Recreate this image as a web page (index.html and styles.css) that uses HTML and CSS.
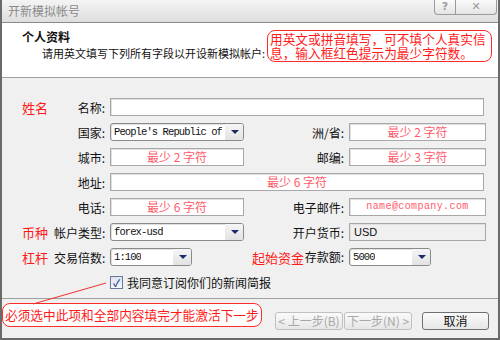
FILE: index.html
```html
<!DOCTYPE html>
<html lang="zh-CN">

<head>
	<meta charset="UTF-8">
	<title>开新模拟帐号</title>
	<link rel="stylesheet" href="styles.css">
</head>

<body>
	<div class="window">
		<div class="titlebar">
			<span class="title">开新模拟帐号</span>
			<div class="caption-btns">
				<span class="cap-btn help">?</span>
				<span class="cap-btn close">✕</span>
			</div>
		</div>

		<header class="intro">
			<div class="intro-text">
				<h1>个人资料</h1>
				<p>请用英文填写下列所有字段以开设新模拟帐户:</p>
			</div>
			<div class="note note-top">用英文或拼音填写，可不填个人真实信息，输入框红色提示为最少字符数。</div>
		</header>

		<section class="form">
			<span class="tag">姓名</span>
			<label>名称:</label>
			<div class="field wide"></div>

			<span></span>
			<label>国家:</label>
			<div class="field select"><span class="val">People's Republic of</span><span class="caret"></span></div>
			<label>洲/省:</label>
			<div class="field hint">最少 2 字符</div>

			<span></span>
			<label>城市:</label>
			<div class="field hint">最少 2 字符</div>
			<label>邮编:</label>
			<div class="field hint">最少 3 字符</div>

			<span></span>
			<label>地址:</label>
			<div class="field wide hint">最少 6 字符</div>

			<span></span>
			<label>电话:</label>
			<div class="field hint">最少 6 字符</div>
			<label>电子邮件:</label>
			<div class="field hint mono">name@company.com</div>

			<span class="tag">币种</span>
			<label>帐户类型:</label>
			<div class="field select"><span class="val">forex-usd</span><span class="caret"></span></div>
			<label>开户货币:</label>
			<div class="field readonly">USD</div>

			<span class="tag">杠杆</span>
			<label>交易倍数:</label>
			<div class="cell"><div class="field select short"><span class="val">1:100</span><span class="caret"></span></div></div>
			<label class="split"><span class="tag">起始资金</span>存款额:</label>
			<div class="cell"><div class="field select short"><span class="val">5000</span><span class="caret"></span></div></div>

			<span></span>
			<span></span>
			<div class="agree"><span class="check">✓</span>我同意订阅你们的新闻简报</div>
		</section>

		<footer class="actions">
			<div class="note note-bottom">必须选中此项和全部内容填完才能激活下一步</div>
			<div class="buttons">
				<span class="btn disabled">&lt; 上一步(B)</span>
				<span class="btn disabled">下一步(N) &gt;</span>
				<span class="btn cancel">取消</span>
			</div>
		</footer>

		<svg class="pointer" width="500" height="340" viewBox="0 0 500 340">
			<line x1="106" y1="283" x2="33" y2="304" stroke="#f03030" stroke-width="1"/>
		</svg>
	</div>
</body>

</html>
```

FILE: styles.css
```css
body {
	margin: 0;
	padding: 0;
	font-family: "Noto Sans CJK SC", sans-serif;
	font-size: 12px;
	color: #111;
}

.window {
	position: relative;
	width: 500px;
	height: 340px;
	box-sizing: border-box;
	border-left: 2px solid #6a6a6a;
	border-right: 2px solid #6a6a6a;
	border-bottom: 2px solid #6a6a6a;
	background: #f0f0f0;
	display: flex;
	flex-direction: column;
	overflow: hidden;
}

.titlebar {
	height: 22px;
	flex: none;
	display: flex;
	justify-content: space-between;
	align-items: flex-start;
	background: linear-gradient(#f4f4f4, #dedede);
	border-bottom: 1px solid #8a8a8a;
}

.title {
	color: #8a8a8a;
	font-size: 12px;
	line-height: 22px;
	padding-left: 6px;
}

.caption-btns {
	display: flex;
	margin-right: 1px;
}

.cap-btn {
	height: 14px;
	line-height: 13px;
	text-align: center;
	font-family: "DejaVu Sans", sans-serif;
	font-weight: bold;
	font-size: 11px;
	color: #9a9a9a;
	border: 1px solid #9a9a9a;
	border-top: none;
	background: linear-gradient(#fafafa, #e4e4e4);
}

.help {
	width: 20px;
	border-radius: 0 0 0 4px;
}

.close {
	width: 40px;
	border-left: none;
	border-radius: 0 0 4px 0;
}

.intro {
	height: 54px;
	flex: none;
	background: #fff;
	border-bottom: 1px solid #a0a0a0;
	display: flex;
	justify-content: space-between;
	align-items: flex-start;
}

.intro-text {
	padding: 6px 0 0 20px;
	white-space: nowrap;
}

.intro h1 {
	margin: 0;
	font-size: 12px;
	line-height: 16px;
	font-weight: bold;
}

.intro p {
	margin: 0;
	padding-left: 20px;
	font-size: 11px;
	line-height: 16px;
}

.note {
	box-sizing: border-box;
	border: 1px solid #ff2a2a;
	border-radius: 8px;
	color: #ff1a1a;
	background: #fff;
	font-size: 12.7px;
	line-height: 14px;
}

.note-top {
	width: 225px;
	height: 32px;
	margin: 7px 6px 0 0;
	padding: 1px 2px;
}

.form {
	display: grid;
	grid-template-columns: 32px 56px 134px 105px 137px;
	grid-auto-rows: 18px;
	row-gap: 7px;
	align-items: center;
	padding: 20px 0 0 20px;
	height: 220px;
	flex: none;
	box-sizing: border-box;
}

.form label {
	text-align: right;
	padding-right: 5px;
	white-space: nowrap;
}

.tag {
	color: #ff1a1a;
	font-size: 13px;
}

.form > .tag {
	grid-column: 1;
}

.split {
	display: flex;
	justify-content: space-between;
	padding-left: 8px;
}

.field {
	height: 18px;
	box-sizing: border-box;
	border: 1px solid #a8a8a8;
	box-shadow: inset 1px 1px 0 #e0e0e0;
	background: #fff;
	line-height: 16px;
}

.wide {
	grid-column: 3 / 6;
	width: 374px;
}

.hint {
	color: #ff5a6a;
	text-align: center;
	font-size: 12px;
}

.mono {
	font-family: "Liberation Mono", monospace;
	font-size: 10px;
	letter-spacing: 0.4px;
}

.readonly {
	background: #f0f0f0;
	padding-left: 4px;
	font-family: "Liberation Sans", sans-serif;
	font-size: 11px;
}

.select {
	display: flex;
	justify-content: space-between;
	border-color: #8a8a8a;
	border-radius: 3px;
	overflow: hidden;
	font-family: "Liberation Mono", monospace;
	font-size: 10.5px;
	letter-spacing: -0.9px;
}

.select .val {
	padding-left: 3px;
	white-space: nowrap;
	overflow: hidden;
}

.caret {
	flex: none;
	width: 18px;
	background: linear-gradient(#f6f6f6, #e2e2e2);
	position: relative;
}

.caret::after {
	content: "";
	position: absolute;
	left: 6px;
	top: 6px;
	border-left: 4px solid transparent;
	border-right: 4px solid transparent;
	border-top: 4px solid #1a2a6a;
}

.short {
	width: 82px;
}

.cell {
	display: flex;
}

.agree {
	grid-column: 3 / 6;
	display: flex;
	align-items: center;
	gap: 4px;
}

.check {
	width: 11px;
	height: 11px;
	border: 1px solid #6a7a9a;
	background: linear-gradient(#dde4f0, #f8f8fc);
	color: #2a4a9a;
	font-size: 10px;
	line-height: 11px;
	text-align: center;
	font-weight: bold;
}

.actions {
	flex: 1;
	border-top: 1px solid #a0a0a0;
	display: flex;
	align-items: flex-start;
	padding-top: 4px;
}

.note-bottom {
	width: 260px;
	height: 24px;
	padding: 4px 2px;
	white-space: nowrap;
}

.buttons {
	display: flex;
	margin: 9px 0 0 13px;
}

.btn {
	height: 18px;
	box-sizing: border-box;
	border: 1px solid #a0a0a0;
	border-radius: 3px;
	line-height: 16px;
	text-align: center;
	background: linear-gradient(#fafafa, #e6e6e6);
	white-space: nowrap;
}

.disabled {
	width: 68px;
	color: #a8a8a8;
	border-color: #c0c0c0;
	margin-right: 1px;
}

.cancel {
	width: 67px;
	margin-left: 9px;
	border-color: #707070;
}

.pointer {
	position: absolute;
	left: -2px;
	top: 0;
	pointer-events: none;
}
```
